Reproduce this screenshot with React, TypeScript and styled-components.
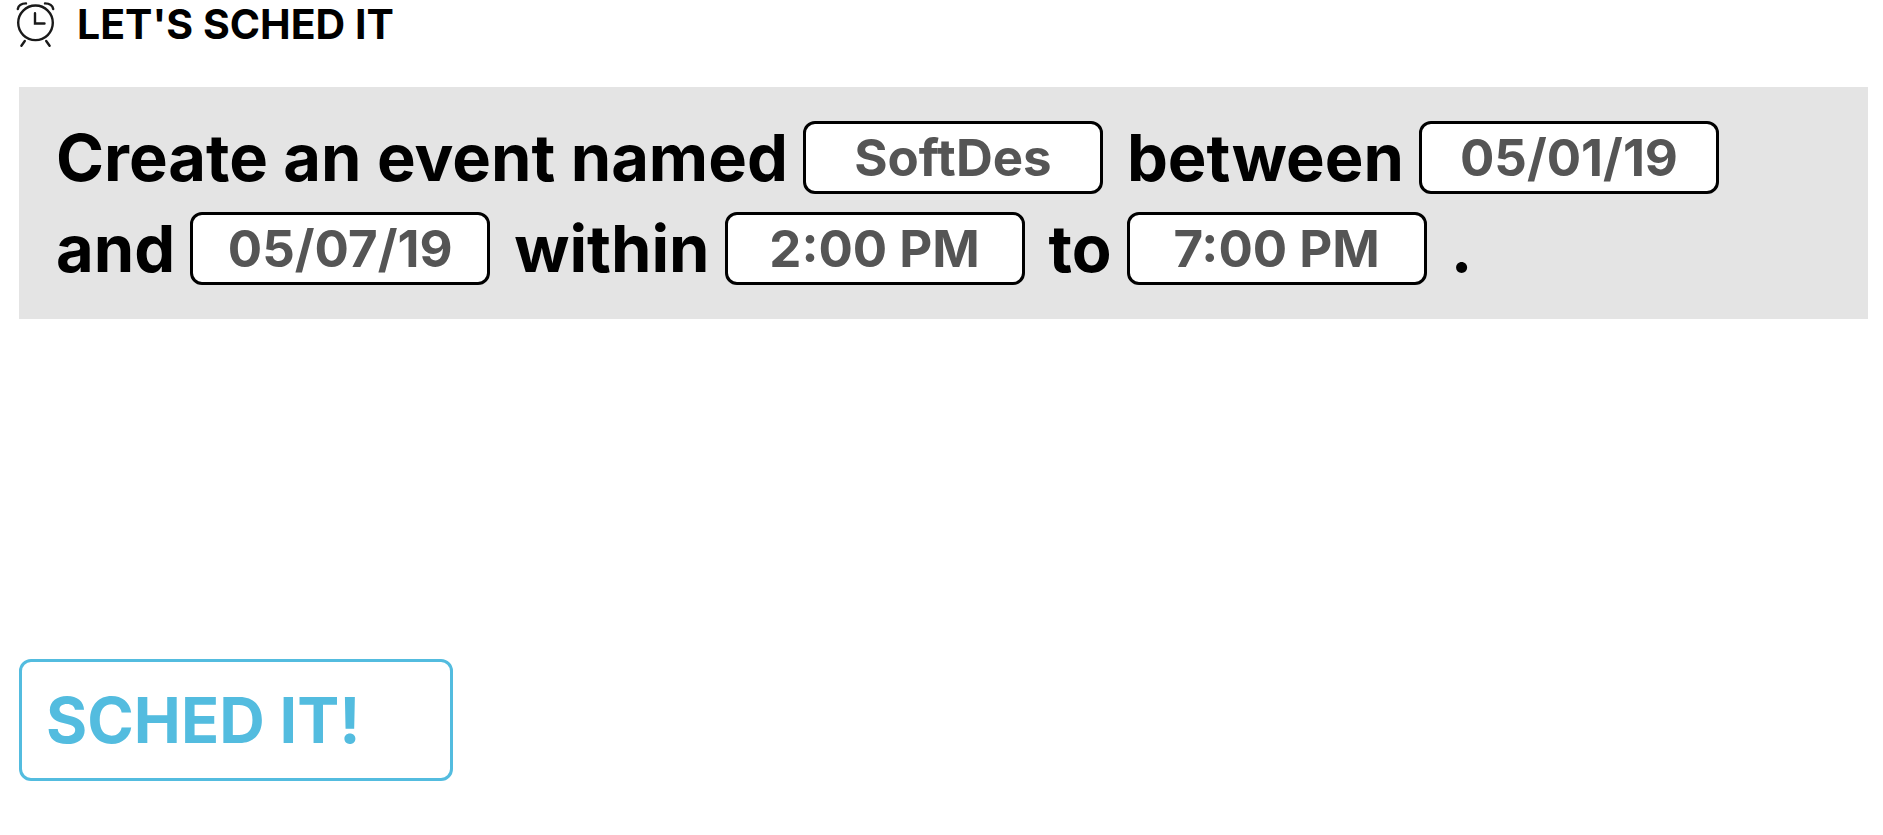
import { useState } from "react";
import styled, { createGlobalStyle } from "styled-components";

const GlobalStyle = createGlobalStyle`
  *, *::before, *::after { box-sizing: border-box; }
  body {
    margin: 0;
    background: #fff;
    color: #000;
    font-family: Inter, "Open Sans", sans-serif;
    font-weight: 700;
  }
`;

const Page = styled.main`
  padding: 0 15px 54px 19px;
`;

const Header = styled.header`
  display: flex;
  align-items: center;
  gap: 20px;
  height: 48px;
  margin-left: -4px;
`;

const Title = styled.h1`
  margin: 0;
  font-size: 41px;
  line-height: 48px;
  font-weight: 700;
`;

const EventForm = styled.form`
  display: block;
`;

const Sentence = styled.div`
  display: flex;
  flex-wrap: wrap;
  align-items: center;
  gap: 18px 24px;
  margin-top: 39px;
  padding: 34px 37px;
  background: #e4e4e4;
  font-size: 65px;
  line-height: 73px;
`;

const Phrase = styled.label`
  display: flex;
  align-items: center;
  gap: 15px;
  white-space: nowrap;
`;

const Field = styled.input`
  width: 300px;
  height: 73px;
  padding: 0 12px;
  border: 3px solid #000;
  border-radius: 12px;
  background: #fff;
  color: #555;
  font: inherit;
  font-size: 51px;
  text-align: center;
`;

const SubmitButton = styled.button`
  display: block;
  width: 434px;
  height: 122px;
  margin-top: 340px;
  padding: 0 24px;
  border: 3px solid #53bcdf;
  border-radius: 12px;
  background: #fff;
  color: #53bcdf;
  font: inherit;
  font-size: 63px;
  text-align: left;
  cursor: pointer;
`;

function AlarmClock() {
  return (
    <svg width="42" height="48" viewBox="0 0 42 48" fill="none" stroke="#1a1a1a" strokeWidth="2.4" strokeLinecap="round" aria-hidden="true">
      <circle cx="20.5" cy="22.8" r="17.3" />
      <path d="M20 13.3v10.2h9.500" />
      <path d="M2.800 9C3.500 5.500 6.500 3.400 11 3.400" />
      <path d="M38.200 9C37.500 5.500 34.500 3.400 30 3.400" />
      <path d="M9.800 41l-3.400 4.700M31.200 41l3.400 4.700" />
    </svg>
  );
}

const PHRASES = [
  { text: "Create an event named", value: "SoftDes" },
  { text: "between", value: "05/01/19" },
  { text: "and", value: "05/07/19" },
  { text: "within", value: "2:00 PM" },
  { text: "to", value: "7:00 PM" },
];

export default function App() {
  const [values, setValues] = useState(PHRASES.map((p) => p.value));

  return (
    <Page>
      <GlobalStyle />
      <Header>
        <AlarmClock />
        <Title>LET'S SCHED IT</Title>
      </Header>
      <EventForm onSubmit={(e) => e.preventDefault()}>
        <Sentence>
          {PHRASES.map((phrase, i) => (
            <Phrase key={phrase.text}>
              {phrase.text}
              <Field
                type="text"
                value={values[i]}
                onChange={(e) => setValues(values.map((v, j) => (j === i ? e.target.value : v)))}
              />
            </Phrase>
          ))}
          <span>.</span>
        </Sentence>
        <SubmitButton type="submit">SCHED IT!</SubmitButton>
      </EventForm>
    </Page>
  );
}
